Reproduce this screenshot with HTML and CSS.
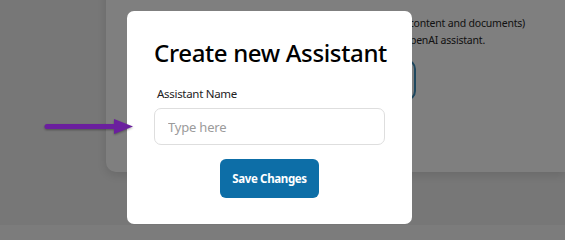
FILE: index.html
```html
<!DOCTYPE html>
<html lang="en">
<head>
<meta charset="utf-8">
<title>Create new Assistant</title>
<link rel="stylesheet" href="styles.css">
</head>
<body>
  <div class="page">
    <section class="card">
      <h2 class="card-title">Setup your Assistant (Step 1)</h2>
      <div class="card-body">
        <div class="card-side"></div>
        <div class="card-main">
          <p class="card-line">Upload your data (like website content and documents)</p>
          <p class="card-line">then use it to tailor your own OpenAI assistant.</p>
          <div class="upload-box"></div>
        </div>
      </div>
    </section>
    <footer class="footer"></footer>
  </div>

  <div class="overlay">
    <svg class="pointer" width="92" height="19" viewBox="0 0 92 19" aria-hidden="true">
      <line x1="3" y1="9.5" x2="74" y2="9.5" stroke="#6b1f9e" stroke-width="5" stroke-linecap="round"/>
      <polygon points="70,2 89,9.5 70,17" fill="#6b1f9e"/>
    </svg>
    <div class="modal">
      <h1 class="modal-title">Create new Assistant</h1>
      <label class="field-label" for="name">Assistant Name</label>
      <input class="field-input" id="name" type="text" placeholder="Type here">
      <div class="actions">
        <button class="btn-primary" type="button">Save Changes</button>
      </div>
    </div>
  </div>
</body>
</html>
```

FILE: styles.css
```css
* { box-sizing: border-box; }

html, body {
  margin: 0;
  height: 100%;
}

body {
  background: #eeeeee;
  font-family: "Noto Sans", "Open Sans", sans-serif;
  color: #222;
  overflow: hidden;
}

.page {
  display: flex;
  flex-direction: column;
  height: 100%;
}

.card {
  margin: -41px 0 0 106px;
  height: 213px;
  background: #ffffff;
  border-radius: 10px 0 0 10px;
  box-shadow: 0 3px 10px rgba(0,0,0,0.12);
  padding: 10px 0 0 0;
}

.card-title {
  margin: 0;
  padding-left: 140px;
  font-size: 22px;
  line-height: 28px;
  font-weight: 700;
  color: #111;
  white-space: nowrap;
}

.card-body {
  display: flex;
  padding-top: 18px;
}

.card-side {
  width: 157px;
  flex: none;
}

.card-main {
  display: flex;
  flex-direction: column;
  align-items: flex-start;
}

.card-line {
  margin: 0;
  font-size: 10.5px;
  letter-spacing: -0.2px;
  line-height: 17px;
  color: #262626;
  white-space: nowrap;
}

.upload-box {
  margin-top: 10px;
  width: 153px;
  height: 42px;
  border: 2px solid #3d8fbd;
  border-radius: 10px;
}

.footer {
  margin-top: auto;
  height: 15px;
  background: #f8f8f8;
}

.overlay {
  position: fixed;
  inset: 0;
  background: rgba(0,0,0,0.5);
  padding: 11px 0 0 127px;
}

.pointer {
  position: absolute;
  left: 44px;
  top: 117px;
  filter: drop-shadow(0 1px 1px rgba(0,0,0,0.35));
}

.modal {
  width: 285px;
  height: 213px;
  background: #ffffff;
  border-radius: 7px;
  padding: 27px 27px 26px;
  display: flex;
  flex-direction: column;
}

.modal-title {
  margin: 0;
  text-align: center;
  font-size: 24px;
  letter-spacing: -0.35px;
  line-height: 30px;
  font-weight: 500;
  color: #000;
  white-space: nowrap;
}

.field-label {
  margin-top: 18px;
  padding-left: 3px;
  font-size: 11.5px;
  letter-spacing: -0.3px;
  line-height: 16px;
  color: #222;
}

.field-input {
  margin-top: 6px;
  height: 38px;
  width: 100%;
  border: 1px solid #dedede;
  border-radius: 7px;
  padding: 0 13px;
  font-family: inherit;
  font-size: 13px;
  letter-spacing: -0.2px;
  color: #222;
  outline: none;
}

.field-input::placeholder {
  color: #9b9b9b;
}

.actions {
  display: flex;
  justify-content: center;
  margin-top: 14px;
}

.btn-primary {
  width: 99px;
  height: 39px;
  border: none;
  border-radius: 6px;
  background: #0d6ea7;
  color: #fff;
  font-family: inherit;
  font-size: 11.5px;
  letter-spacing: -0.35px;
  font-weight: 700;
  padding: 0;
}
```
